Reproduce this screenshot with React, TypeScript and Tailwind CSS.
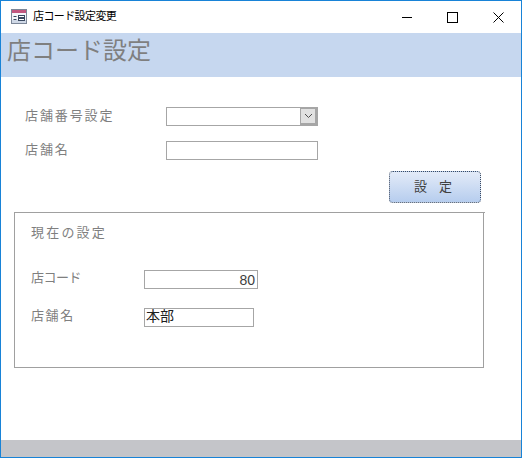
import React from 'react';

const fontClass = "font-['Liberation_Sans','Noto_Sans_CJK_JP',sans-serif]";

function FormIcon() {
  return (
    <svg width="17" height="15" viewBox="0 0 17 15" className="shrink-0">
      <rect x="0.5" y="0.5" width="15" height="14" fill="#f4f6fa" stroke="#7c8798" />
      <rect x="1" y="1" width="14" height="3" fill="#c2577f" />
      <rect x="1" y="11" width="14" height="3" fill="#cfd8e6" />
      <path d="M2.5 7.5h3M2.5 10.5h3" stroke="#39485f" />
      <rect x="7.5" y="6.5" width="6" height="2" fill="#fff" stroke="#39485f" />
      <rect x="7.5" y="9.5" width="6" height="2" fill="#fff" stroke="#39485f" />
    </svg>
  );
}

function WindowButtons() {
  return (
    <div className="flex items-center">
      <div className="w-[46px] flex justify-center">
        <svg width="11" height="11" viewBox="0 0 11 11"><path d="M1 5.5h10" stroke="#000" /></svg>
      </div>
      <div className="w-[46px] flex justify-center">
        <svg width="11" height="11" viewBox="0 0 11 11"><rect x="0.5" y="0.5" width="10" height="10" fill="none" stroke="#000" /></svg>
      </div>
      <div className="w-[46px] flex justify-center">
        <svg width="11" height="11" viewBox="0 0 11 11"><path d="M0.5 0.5l10 10M10.5 0.5l-10 10" stroke="#000" /></svg>
      </div>
    </div>
  );
}

function Label({ text, className }: { text: string; className: string }) {
  return <span className={`text-[13px] leading-[17px] text-[#7f7f7f] ${className}`}>{text}</span>;
}

export default function App() {
  return (
    <div className={`w-[522px] h-[458px] border border-[#1883d7] bg-white flex flex-col overflow-hidden ${fontClass}`}>
      <div className="h-[32px] flex items-center justify-between shrink-0">
        <div className="flex items-center gap-[5px] pl-[10px] pb-[2px]">
          <FormIcon />
          <span className="text-[11px] tracking-[-0.6px] text-black">店コード設定変更</span>
        </div>
        <WindowButtons />
      </div>

      <div className="h-[44px] bg-[#c6d7ef] shrink-0 pl-[6px]">
        <h1 className="text-[24px] leading-[36px] font-normal text-[#7f7f7f]">店コード設定</h1>
      </div>

      <div className="flex-1 flex flex-col pt-[30px]">
        <div className="flex items-center h-[19px] pl-[24px]">
          <Label text="店舗番号設定" className="w-[141px] pb-[2px] tracking-[1.9px]" />
          <div className="w-[152px] h-[19px] border border-[#a6a6a6] flex justify-end">
            <div className="w-[17px] h-full bg-[#e1e1e1] border-[#a6a6a6] border-t border-l border-r-[2px] border-b-[2px] flex items-center justify-center">
              <svg width="9" height="6" viewBox="0 0 9 6"><path d="M1 1l3.5 3.5L8 1" fill="none" stroke="#505050" /></svg>
            </div>
          </div>
        </div>

        <div className="flex items-center h-[19px] pl-[24px] mt-[15px]">
          <Label text="店舗名" className="w-[141px] pb-[2px] tracking-[1.9px]" />
          <div className="w-[152px] h-[19px] border border-[#a6a6a6]" />
        </div>

        <div className="flex justify-end pr-[40px] mt-[11px]">
          <button className="w-[92px] h-[32px] rounded-[4px] border border-dotted border-[#3c4a5e] bg-gradient-to-b from-[#e3ebf8] to-[#b6cdee] text-[13px] text-[#404040] flex items-center justify-center gap-[12px] pr-[4px]">
            <span>設</span>
            <span>定</span>
          </button>
        </div>

        <div className="ml-[13px] mt-[9px] w-[471px] h-[1px] bg-[#a0a0a0]" />
        <div className="ml-[13px] w-[470px] h-[155px] border-l border-r border-b border-[#a0a0a0] pl-[16px] pt-[11px]">
          <Label text="現在の設定" className="block pb-[2px] tracking-[2.2px]" />

          <div className="flex items-center h-[19px] mt-[27px]">
            <Label text="店コード" className="w-[113px] pb-[4px] tracking-[-0.5px]" />
            <div className="w-[114px] h-[19px] border border-[#a6a6a6] text-right pr-[2px] text-[14px] leading-[19px] text-[#404040]">80</div>
          </div>

          <div className="flex items-center h-[19px] mt-[19px]">
            <Label text="店舗名" className="w-[113px] pb-[4px] tracking-[1.6px]" />
            <div className="w-[110px] h-[19px] border border-[#a6a6a6] pl-[1px] text-[14px] leading-[15px] text-[#202020]">本部</div>
          </div>
        </div>
      </div>

      <div className="h-[17px] bg-[#c4c5c9] shrink-0" />
    </div>
  );
}
